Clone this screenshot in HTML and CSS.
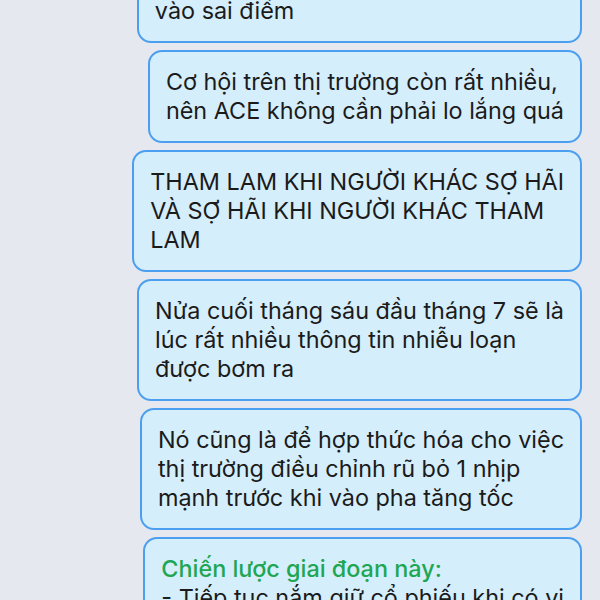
FILE: index.html
```html
<!DOCTYPE html>
<html lang="vi">
<head>
    <meta charset="UTF-8">
    <meta name="viewport" content="width=device-width, initial-scale=1.0">
    <title>Tin nhắn</title>
    <link rel="stylesheet" href="styles.css">
</head>
<body>
    <div class="chat">
        <div class="bubble">Đừng vì quá lo sợ mà bán ra hay mua<br>vào sai điểm</div>
        <div class="bubble">Cơ hội trên thị trường còn rất nhiều,<br>nên ACE không cần phải lo lắng quá</div>
        <div class="bubble">THAM LAM KHI NGƯỜI KHÁC SỢ HÃI<br>VÀ SỢ HÃI KHI NGƯỜI KHÁC THAM<br>LAM</div>
        <div class="bubble">Nửa cuối tháng sáu đầu tháng 7 sẽ là<br>lúc rất nhiều thông tin nhiễu loạn<br>được bơm ra</div>
        <div class="bubble">Nó cũng là để hợp thức hóa cho việc<br>thị trường điều chỉnh rũ bỏ 1 nhịp<br>mạnh trước khi vào pha tăng tốc</div>
        <div class="bubble">
            <span class="title">Chiến lược giai đoạn này:</span><br>
            - Tiếp tục nắm giữ cổ phiếu khi có vị<br>thế tốt và nền giá vững
        </div>
    </div>
</body>
</html>
```

FILE: styles.css
```css
body {
    margin: 0;
    background-color: #e5e9ef;
    font-family: Inter, "Noto Sans", sans-serif;
    color: #1b1b1b;
    height: 600px;
    overflow: hidden;
}

.chat {
    display: flex;
    flex-direction: column;
    align-items: flex-end;
    gap: 7px;
    padding-right: 18px;
    margin-top: -50px;
}

.bubble {
    background: #d5eefb;
    border: 2px solid #4c9ff0;
    border-radius: 14px;
    padding: 15px 16px 16px 16px;
    font-size: 23.4px;
    line-height: 29px;
}

.title {
    color: #1fa653;
    font-weight: 500;
}
```
